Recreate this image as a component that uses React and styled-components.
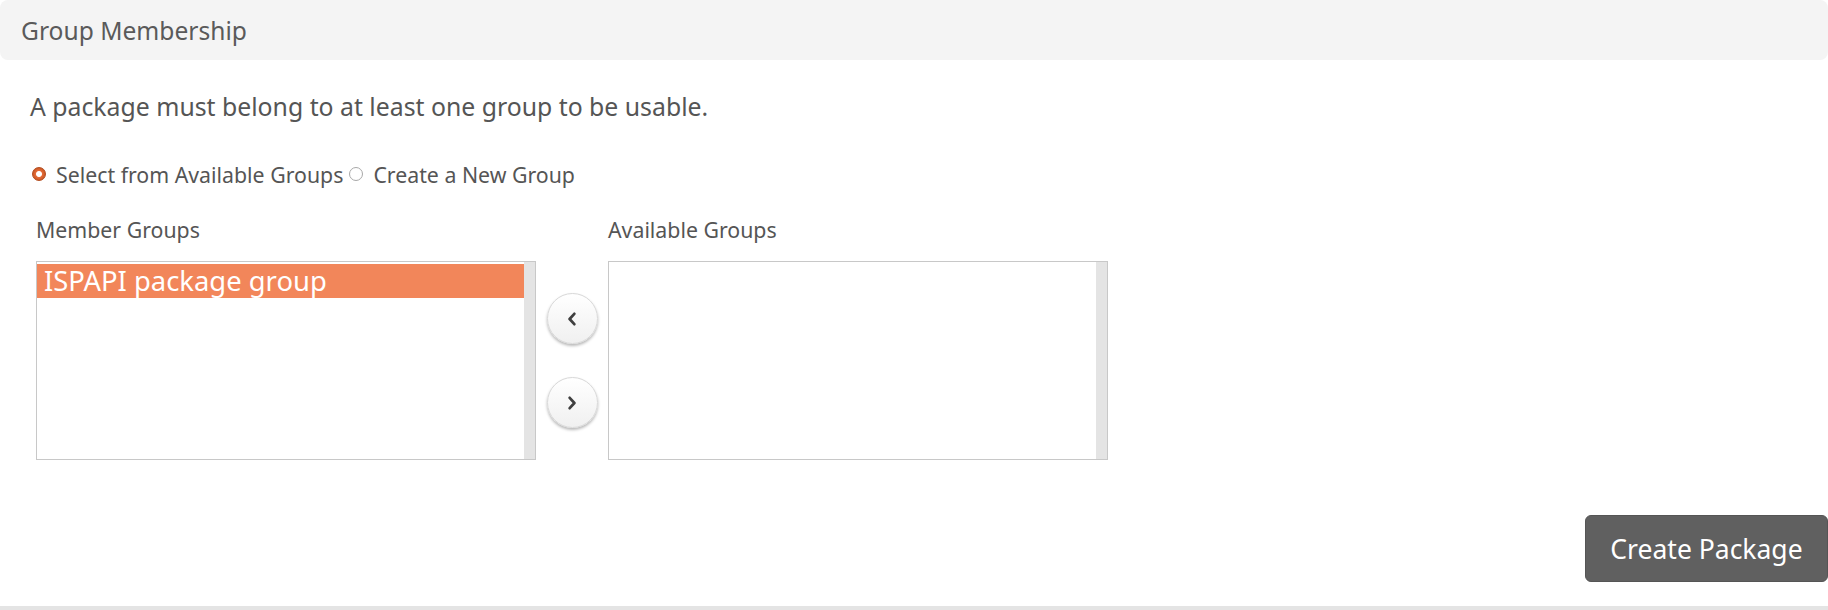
import React from "react";
import styled, { createGlobalStyle } from "styled-components";

const GlobalStyle = createGlobalStyle`
  html, body {
    margin: 0;
    padding: 0;
    background: #fff;
  }
  body {
    font-family: "Noto Sans", "Open Sans", sans-serif;
    color: #555;
  }
`;

const Panel = styled.div`
  width: 1828px;
  border-bottom: 4px solid #e4e4e4;
`;

const PanelHeader = styled.div`
  display: flex;
  align-items: center;
  height: 60px;
  padding-left: 21px;
  background: #f4f4f4;
  border-radius: 8px;
  font-size: 24.6px;
  color: #5a5a5a;
`;

const PanelBody = styled.div`
  display: flex;
  flex-direction: column;
  padding: 30px 0 24px 30px;
`;

const Intro = styled.p`
  margin: 0;
  font-size: 24.8px;
  line-height: 32px;
`;

const RadioRow = styled.div`
  display: flex;
  align-items: center;
  margin-top: 38px;
  height: 28px;
  font-size: 21.3px;
`;

const RadioLabel = styled.label`
  display: flex;
  align-items: center;
  margin-right: 4px;
`;

const RadioDot = styled.span`
  box-sizing: border-box;
  width: 14px;
  height: 14px;
  margin: 0 10px 0 2px;
  border-radius: 50%;
  ${({ $checked }) =>
    $checked
      ? `
    background: radial-gradient(circle, #fff 0 2.5px, #e36b37 3.5px, #c4521f 7px);
    border: 1px solid #b24a1c;
  `
      : `
    background: #fff;
    border: 1px solid #a8a8a8;
  `}
`;

const Lists = styled.div`
  display: grid;
  grid-template-columns: 500px 72px 500px;
  grid-template-rows: auto 199px;
  row-gap: 17px;
  margin-top: 28px;
  padding-left: 6px;
`;

const ListLabel = styled.div`
  font-size: 21.3px;
  line-height: 28px;
`;

const ListBox = styled.div`
  box-sizing: border-box;
  position: relative;
  display: flex;
  flex-direction: column;
  padding: 2px 11px 0 0;
  border: 1px solid #c8c8c8;
  background: #fff;
  overflow: hidden;

  &::after {
    content: "";
    position: absolute;
    top: 0;
    right: 0;
    bottom: 0;
    width: 11px;
    background: #e4e4e4;
  }
`;

const Option = styled.div`
  height: 34px;
  padding-left: 7px;
  font-size: 27.4px;
  line-height: 34px;
  color: #fff;
  background: #f2865a;
  white-space: nowrap;
`;

const Mover = styled.div`
  display: flex;
  flex-direction: column;
  align-items: center;
  justify-content: center;
  gap: 33px;
`;

const RoundButton = styled.button`
  display: flex;
  align-items: center;
  justify-content: center;
  width: 51px;
  height: 51px;
  padding: 0;
  border: 1px solid #d8d8d8;
  border-radius: 50%;
  background: linear-gradient(#ffffff, #f0f0f0);
  box-shadow: 0 2px 3px rgba(0, 0, 0, 0.28);
  cursor: pointer;
`;

const Footer = styled.div`
  display: flex;
  justify-content: flex-end;
  margin-top: 55px;
`;

const PrimaryButton = styled.button`
  width: 243px;
  height: 67px;
  padding: 0;
  border: 1px solid #555;
  border-radius: 6px;
  background: #606060;
  color: #fff;
  font-family: "Noto Sans", "Open Sans", sans-serif;
  font-size: 26.5px;
  cursor: pointer;
`;

const Chevron = ({ dir }) => (
  <svg width="10" height="14" viewBox="0 0 10 14">
    <path
      d={dir === "left" ? "M7.3 1.8 L2.6 7 L7.3 12.2" : "M2.7 1.8 L7.4 7 L2.7 12.2"}
      fill="none"
      stroke="#3f3f3f"
      strokeWidth="2.7"
      strokeLinecap="round"
      strokeLinejoin="round"
    />
  </svg>
);

const App = () => (
  <>
    <GlobalStyle />
    <Panel>
      <PanelHeader>Group Membership</PanelHeader>
      <PanelBody>
        <Intro>A package must belong to at least one group to be usable.</Intro>
        <RadioRow>
          <RadioLabel>
            <RadioDot $checked />
            Select from Available Groups
          </RadioLabel>
          <RadioLabel>
            <RadioDot />
            Create a New Group
          </RadioLabel>
        </RadioRow>
        <Lists>
          <ListLabel>Member Groups</ListLabel>
          <div />
          <ListLabel>Available Groups</ListLabel>
          <ListBox>
            <Option>ISPAPI package group</Option>
          </ListBox>
          <Mover>
            <RoundButton aria-label="Add">
              <Chevron dir="left" />
            </RoundButton>
            <RoundButton aria-label="Remove">
              <Chevron dir="right" />
            </RoundButton>
          </Mover>
          <ListBox />
        </Lists>
        <Footer>
          <PrimaryButton>Create Package</PrimaryButton>
        </Footer>
      </PanelBody>
    </Panel>
  </>
);

export default App;
